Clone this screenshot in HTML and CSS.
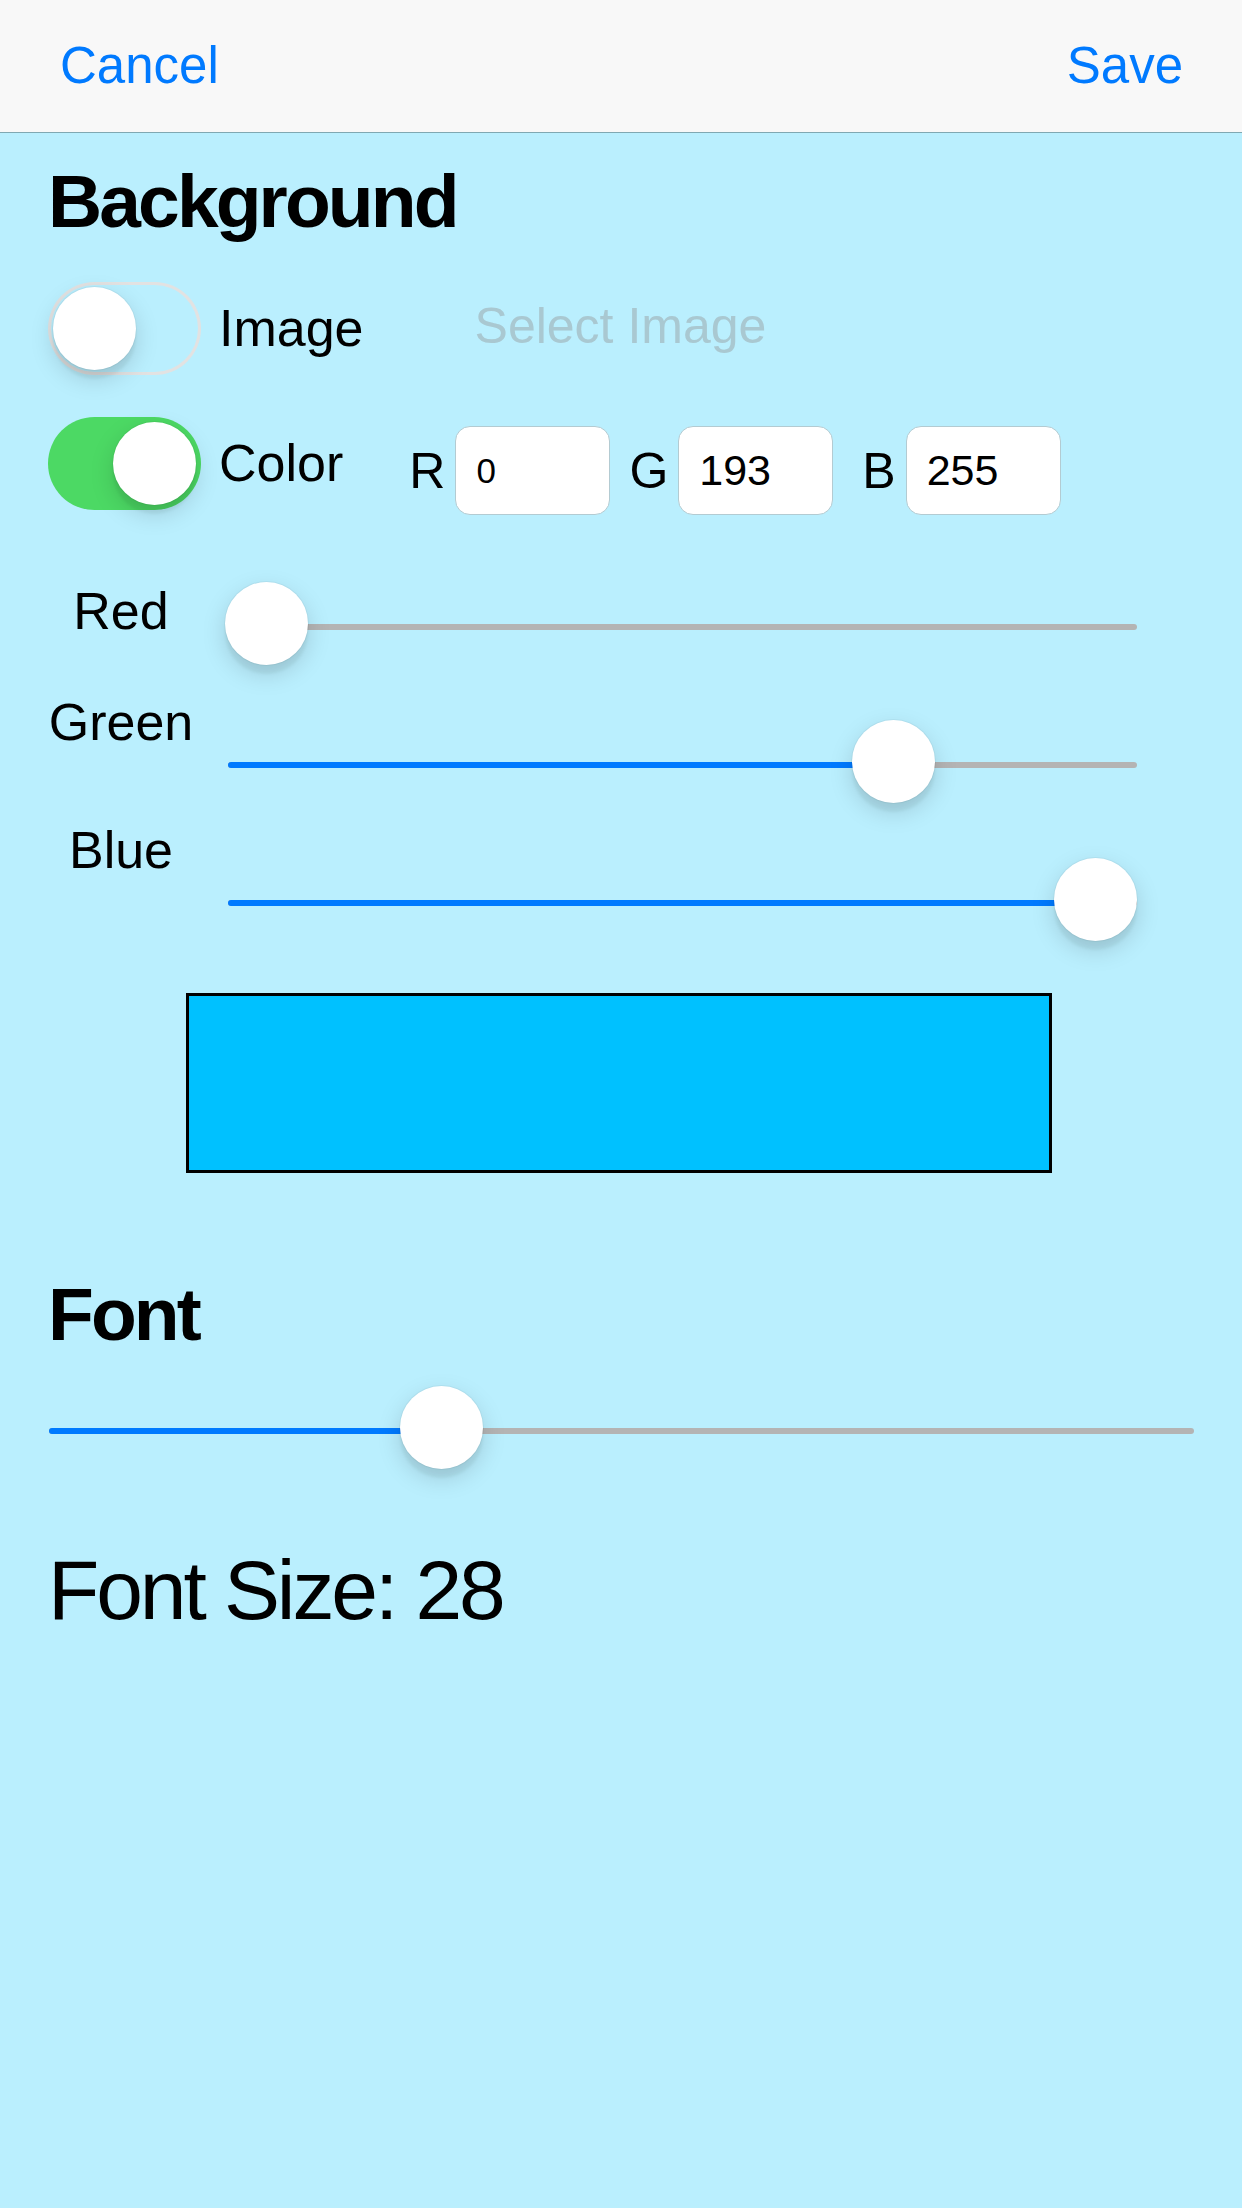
FILE: index.html
```html
<!DOCTYPE html>
<html lang="en">
<head>
<meta charset="utf-8">
<title>Settings</title>
<link rel="stylesheet" href="styles.css">
</head>
<body>
<header class="nav">
  <span class="nav-btn">Cancel</span>
  <span class="nav-btn">Save</span>
</header>
<main class="content">
  <h2 class="heading">Background</h2>

  <div class="row row-image">
    <div class="toggle"><div class="knob"></div></div>
    <span class="label">Image</span>
    <span class="select">Select Image</span>
  </div>

  <div class="row row-color">
    <div class="toggle on"><div class="knob"></div></div>
    <span class="label">Color</span>
    <div class="rgb">
      <div class="chan chan-r"><span class="ch">R</span><div class="field small">0</div></div>
      <div class="chan chan-g"><span class="ch">G</span><div class="field">193</div></div>
      <div class="chan chan-b"><span class="ch">B</span><div class="field">255</div></div>
    </div>
  </div>

  <div class="slider-row first">
    <span class="slabel slabel-red">Red</span>
    <div class="slider" style="--v:0">
      <div class="track"><div class="fill"></div></div>
      <div class="thumb"></div>
    </div>
  </div>
  <div class="slider-row">
    <span class="slabel slabel-green">Green</span>
    <div class="slider" style="--v:0.7569">
      <div class="track"><div class="fill"></div></div>
      <div class="thumb"></div>
    </div>
  </div>
  <div class="slider-row">
    <span class="slabel slabel-blue">Blue</span>
    <div class="slider" style="--v:1">
      <div class="track"><div class="fill"></div></div>
      <div class="thumb"></div>
    </div>
  </div>

  <div class="swatch"></div>

  <h2 class="heading heading-font">Font</h2>
  <div class="slider slider-wide" style="--v:0.3324">
    <div class="track"><div class="fill"></div></div>
    <div class="thumb"></div>
  </div>
  <p class="font-size">Font Size: 28</p>
</main>
</body>
</html>
```
FILE: styles.css
```css
html, body {
  margin: 0;
  padding: 0;
}
body {
  background: #baeffe;
  font-family: "Liberation Sans", Arial, sans-serif;
  color: #000;
  min-height: 2208px;
}

.nav {
  height: 132px;
  background: #f8f8f8;
  border-bottom: 1px solid #80a8b2;
  display: flex;
  justify-content: space-between;
  align-items: center;
  padding: 0 59px 0 60px;
}
.nav-btn {
  font-size: 51px;
  line-height: 132px;
  color: #007aff;
}

.content {
  padding: 0 0 0 48px;
}

.heading {
  margin: 31px 0 0 0;
  font-size: 75px;
  line-height: 75px;
  font-weight: 700;
  letter-spacing: -2.9px;
}
.heading-font {
  margin-top: 104px;
}

.row {
  display: flex;
  align-items: center;
  height: 93px;
  margin-top: 43px;
}
.row-color {
  margin-top: 42px;
}

.toggle {
  flex: none;
  width: 153px;
  height: 93px;
  box-sizing: border-box;
  border-radius: 47px;
  box-shadow: inset 0 0 0 3px #e2e2e2;
  display: flex;
  align-items: center;
  padding: 0 5px;
}
.toggle.on {
  background: #4cd964;
  box-shadow: none;
  justify-content: flex-end;
}
.knob {
  width: 83px;
  height: 83px;
  border-radius: 50%;
  background: #fff;
  box-shadow: 0 9px 3px rgba(0, 0, 0, 0.05), 0 9px 24px rgba(0, 0, 0, 0.15), 0 0 0 1px rgba(0, 0, 0, 0.04);
}

.label {
  font-size: 52px;
  line-height: 93px;
  margin-left: 18px;
}
.select {
  font-size: 50px;
  color: #a9c8d1;
  margin: 0 0 6px 111px;
}

.rgb {
  display: flex;
  align-items: center;
  align-self: flex-start;
  height: 89px;
  margin: 9px 0 0 66px;
}
.chan {
  display: flex;
  align-items: center;
  gap: 10px;
}
.chan-g {
  margin-left: 19px;
}
.chan-b {
  margin-left: 29px;
}
.ch {
  font-size: 50px;
}
.field {
  width: 155px;
  height: 89px;
  box-sizing: border-box;
  background: #fff;
  border: 1px solid #b3cbd2;
  border-radius: 15px;
  display: flex;
  align-items: center;
  padding-left: 20px;
  font-size: 43px;
}
.field.small {
  font-size: 35px;
}

.slider-row {
  display: flex;
  align-items: flex-start;
  height: 138px;
}
.slider-row.first {
  margin-top: 48px;
}
.slabel {
  flex: none;
  width: 146px;
  text-align: center;
  font-size: 52px;
  line-height: 52px;
}
.slabel-red {
  margin-top: 27px;
}
.slabel-green {
  margin-top: 0;
}
.slabel-blue {
  margin-top: -10px;
}
.slider-row .slider {
  width: 909px;
  margin: 24px 0 0 34px;
}

.slider {
  position: relative;
  flex: none;
  height: 83px;
  display: flex;
  align-items: center;
}
.track {
  width: 100%;
  height: 6px;
  margin-top: 6px;
  border-radius: 3px;
  background: #b4b4b4;
  overflow: hidden;
}
.fill {
  height: 100%;
  background: #007aff;
  width: calc(var(--v) * (100% - 80px) + 38px);
}
.thumb {
  position: absolute;
  top: 0;
  left: calc(var(--v) * (100% - 80px) - 3px);
  width: 83px;
  height: 83px;
  border-radius: 50%;
  background: #fff;
  box-shadow: 0 9px 3px rgba(0, 0, 0, 0.05), 0 9px 24px rgba(0, 0, 0, 0.15), 0 0 0 1px rgba(0, 0, 0, 0.04);
}

.swatch {
  width: 866px;
  height: 180px;
  box-sizing: border-box;
  margin: 21px 0 0 138px;
  border: 3px solid #000;
  background: #00c1ff;
}

.slider-wide {
  width: 1145px;
  margin: 34px 0 0 1px;
}

.font-size {
  margin: 79px 0 0 0;
  font-size: 84px;
  line-height: 84px;
  letter-spacing: -3.1px;
}
```
